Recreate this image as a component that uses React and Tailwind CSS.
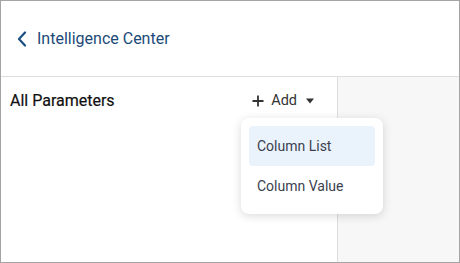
export default function App() {
  return (
    <div
      className="w-[460px] h-[263px] border border-[#a4a4a4] bg-white flex flex-col overflow-hidden"
      style={{ fontFamily: "Roboto, 'Noto Sans', sans-serif" }}
    >
      <div className="h-[76px] shrink-0 border-b border-[#dedede] flex items-center pl-[16px] pt-[1px]">
        <svg width="10" height="16" viewBox="0 0 10 16" className="mr-[10px]">
          <path d="M8 1.5 L2 8 L8 14.5" fill="none" stroke="#1b4f82" strokeWidth="2.2" strokeLinecap="round" strokeLinejoin="round" />
        </svg>
        <span className="text-[16px] text-[#1b4a78] leading-none">Intelligence Center</span>
      </div>
      <div className="flex flex-1 min-h-0">
        <div className="w-[337px] shrink-0 border-r border-[#dedede] relative">
          <div className="flex items-center justify-between pl-[9px] pr-[23px] pt-[14px]">
            <span className="text-[16px] text-[#111] leading-[20px] [-webkit-text-stroke:0.2px_#111]">All Parameters</span>
            <div className="flex items-center text-[#333] text-[14.5px] leading-[20px]">
              <svg width="12" height="12" viewBox="0 0 12 12" className="mr-[7px]">
                <path d="M6 0.5 V11.5 M0.5 6 H11.5" stroke="#333" strokeWidth="1.8" />
              </svg>
              <span>Add</span>
              <svg width="8" height="6" viewBox="0 0 8 6" className="ml-[9px]">
                <path d="M0 0.5 H8 L4 5.5 Z" fill="#333" />
              </svg>
            </div>
          </div>
          <div className="absolute left-[240px] top-[41px] w-[142px] bg-white rounded-[8px] p-[8px] shadow-[0_2px_10px_rgba(0,0,0,0.15)] z-10">
            <div className="h-[40px] rounded-[4px] bg-[#eaf2fc] flex items-center px-[8px] text-[14px] text-[#3b3f4f]">Column List</div>
            <div className="h-[40px] rounded-[4px] flex items-center px-[8px] text-[14px] text-[#3b3f4f]">Column Value</div>
          </div>
        </div>
        <div className="flex-1 bg-[#f7f7f7]" />
      </div>
    </div>
  );
}
